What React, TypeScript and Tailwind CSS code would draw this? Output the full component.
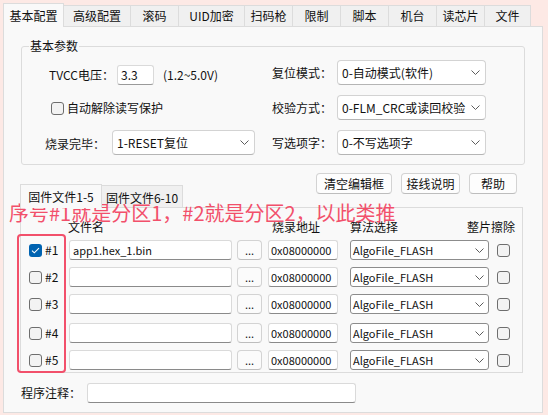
import React from "react";

const Chevron = () => (
  <svg width="9" height="5" viewBox="0 0 9 5" className="shrink-0">
    <path d="M0.5 0.5 L4.5 4.5 L8.5 0.5" fill="none" stroke="#5c5c5c" strokeWidth="1" />
  </svg>
);

function Check({ checked }: { checked?: boolean }) {
  return checked ? (
    <div className="w-[13px] h-[13px] rounded-[3px] bg-[#0063b1] flex items-center justify-center shrink-0">
      <svg width="9" height="7" viewBox="0 0 9 7">
        <path d="M1 3.6 L3.3 5.8 L8 1.2" fill="none" stroke="white" strokeWidth="1.1" />
      </svg>
    </div>
  ) : (
    <div className="w-[13px] h-[13px] rounded-[3px] border border-[#6e6e6e] bg-[#f3f3f3] shrink-0" />
  );
}

function TopSelect({ text, cls }: { text: string; cls: string }) {
  return (
    <div
      className={
        "h-[25px] bg-white border border-[#d3d3d3] border-b-[#b5b5b5] rounded-[4px] flex items-center justify-between pl-[4px] pr-[5px] " +
        cls
      }
    >
      <span className="leading-[16px] whitespace-nowrap">{text}</span>
      <Chevron />
    </div>
  );
}

function Btn({ text, cls }: { text: string; cls: string }) {
  return (
    <div
      className={
        "h-[21px] bg-[#fdfdfd] border border-[#d3d3d3] border-b-[#bdbdbd] rounded-[4px] flex items-center justify-center leading-[16px] " +
        cls
      }
    >
      {text}
    </div>
  );
}

const tabs: [string, string][] = [
  ["基本配置", "w-[61px]"],
  ["高级配置", "w-[67px]"],
  ["滚码", "w-[48px]"],
  ["UID加密", "w-[66px]"],
  ["扫码枪", "w-[48px]"],
  ["限制", "w-[48px]"],
  ["脚本", "w-[48px]"],
  ["机台", "w-[48px]"],
  ["读芯片", "w-[48px]"],
  ["文件", "w-[46px]"],
];

const rowMt = ["mt-[6px]", "mt-[7px]", "mt-[7px]", "mt-[9px]", "mt-[7px]"];

function FileRow({ n, idx, file }: { n: number; idx: number; file?: string }) {
  return (
    <div className={"flex items-center h-[20px] " + rowMt[idx]}>
      <div className="ml-[8px] w-[40px] flex items-center">
        <Check checked={n === 1} />
        <span className="ml-[3px] leading-[16px]">#{n}</span>
      </div>
      <div className="w-[163px] h-[20px] bg-white border border-[#dadada] border-b-[#8a8a8a] rounded-[3px] flex items-center pl-[3px] leading-[16px] text-[11px]">
        {file}
      </div>
      <div className="ml-[5px] w-[25px] h-[20px] bg-[#fbfbfb] border border-[#d3d3d3] border-b-[#bdbdbd] rounded-[4px] flex items-center justify-center leading-[16px] text-[11px]">
        ...
      </div>
      <div className="ml-[6px] w-[70px] h-[20px] bg-white border border-[#dadada] border-b-[#8a8a8a] rounded-[3px] flex items-center pl-[2px] leading-[16px] text-[11px]">
        0x08000000
      </div>
      <div className="ml-[12px] w-[139px] h-[20px] bg-white border border-[#8c8c8c] rounded-[3px] flex items-center justify-between pl-[2px] pr-[4px]">
        <span className="leading-[16px] text-[11px]">AlgoFile_FLASH</span>
        <Chevron />
      </div>
      <div className="ml-[8px]">
        <Check />
      </div>
    </div>
  );
}

export default function App() {
  return (
    <div className="relative w-[548px] h-[415px] bg-[#fde9e5] overflow-hidden text-[12px] text-[#111] font-['Noto_Sans_CJK_SC','Noto_Sans',sans-serif]">
      <div className="ml-[3px] pt-[3px] w-[540px]">
        {/* top tabs */}
        <div className="flex items-end h-[23px]">
          {tabs.map(([t, w], i) =>
            i === 0 ? (
              <div
                key={t}
                className={
                  "relative z-10 -mb-px h-[24px] bg-[#f9f9f9] border border-b-0 border-[#dcdcdc] flex items-center justify-center leading-[16px] " +
                  w
                }
              >
                {t}
              </div>
            ) : (
              <div
                key={t}
                className={
                  "h-[21px] bg-[#f0f0f0] border border-b-0 border-l-0 border-[#dcdcdc] flex items-center justify-center leading-[16px] " +
                  w
                }
              >
                {t}
              </div>
            )
          )}
        </div>
        {/* main panel */}
        <div className="h-[387px] border border-[#dcdcdc] bg-[#f9f9f9]">
          {/* group box */}
          <div className="relative ml-[17px] mt-[19px] w-[504px] h-[119px] border border-[#dcdcdc] rounded-[3px] flex">
            <span className="absolute left-[7px] -top-[9px] px-[1px] bg-[#f9f9f9] leading-[16px]">基本参数</span>
            {/* left column */}
            <div className="ml-[23px] w-[227px] pt-[18px] flex flex-col">
              <div className="flex items-center h-[20px]">
                <span className="ml-[4px] w-[68px] leading-[16px] whitespace-nowrap">TVCC电压：</span>
                <div className="w-[37px] h-[20px] bg-white border border-[#dadada] border-b-[#9a9a9a] rounded-[3px] flex items-center pl-[3px] leading-[16px]">
                  3.3
                </div>
                <span className="ml-[9px] leading-[16px]">(1.2~5.0V)</span>
              </div>
              <div className="flex items-center h-[20px] mt-[13px]">
                <div className="ml-[6px]">
                  <Check />
                </div>
                <span className="ml-[3px] leading-[16px]">自动解除读写保护</span>
              </div>
              <div className="flex items-center mt-[12px]">
                <span className="w-[67px] leading-[16px] pt-[2px]">烧录完毕：</span>
                <TopSelect text="1-RESET复位" cls="w-[143px]" />
              </div>
            </div>
            {/* right column */}
            <div className="pt-[13px] flex flex-col gap-[10px]">
              <div className="flex items-center">
                <span className="w-[65px] leading-[16px]">复位模式：</span>
                <TopSelect text="0-自动模式(软件)" cls="w-[149px]" />
              </div>
              <div className="flex items-center">
                <span className="w-[65px] leading-[16px]">校验方式：</span>
                <TopSelect text="0-FLM_CRC或读回校验" cls="w-[149px]" />
              </div>
              <div className="flex items-center">
                <span className="w-[65px] leading-[16px]">写选项字：</span>
                <TopSelect text="0-不写选项字" cls="w-[149px]" />
              </div>
            </div>
          </div>
          {/* tabs + buttons */}
          <div className="flex h-[42px]">
            <div className="ml-[16px] self-end flex items-end">
              <div className="relative z-10 -mb-px w-[82px] h-[24px] bg-[#f9f9f9] border border-b-0 border-[#dcdcdc] flex items-center justify-center leading-[16px]">
                固件文件1-5
              </div>
              <div className="w-[81px] h-[22px] bg-[#f0f0f0] border border-b-0 border-l-0 border-[#dcdcdc] flex items-center justify-center leading-[16px] pt-[2px]">
                固件文件6-10
              </div>
            </div>
            <div className="ml-auto mr-[25px] mt-[8px] flex gap-[9px]">
              <Btn text="清空编辑框" cls="w-[76px]" />
              <Btn text="接线说明" cls="w-[59px]" />
              <Btn text="帮助" cls="w-[48px]" />
            </div>
          </div>
          {/* inner panel */}
          <div className="ml-[16px] w-[503px] h-[166px] border border-[#dcdcdc] bg-[#f9f9f9]">
            <div className="flex h-[14px] mt-[12px] leading-[14px] whitespace-nowrap">
              <span className="ml-[47px] w-[204px]">文件名</span>
              <span className="w-[78px]">烧录地址</span>
              <span className="w-[117px]">算法选择</span>
              <span>整片擦除</span>
            </div>
            {[1, 2, 3, 4, 5].map((n, i) => (
              <FileRow key={n} n={n} idx={i} file={n === 1 ? "app1.hex_1.bin" : ""} />
            ))}
          </div>
          {/* comment row */}
          <div className="flex items-center h-[20px] mt-[10px] ml-[17px]">
            <span className="w-[66px] leading-[16px]">程序注释：</span>
            <div className="w-[269px] h-[20px] bg-white border border-[#dadada] border-b-[#8a8a8a] rounded-[3px]" />
          </div>
        </div>
      </div>
      {/* annotation overlays */}
      <div className="absolute left-[9px] top-[200px] text-[20px] leading-[26px] text-[#f2506b] whitespace-nowrap">
        序号#1就是分区1，#2就是分区2，以此类推
      </div>
      <div className="absolute left-[17px] top-[234px] w-[49px] h-[139px] border-2 border-[#f2506b] rounded-[4px]" />
    </div>
  );
}
